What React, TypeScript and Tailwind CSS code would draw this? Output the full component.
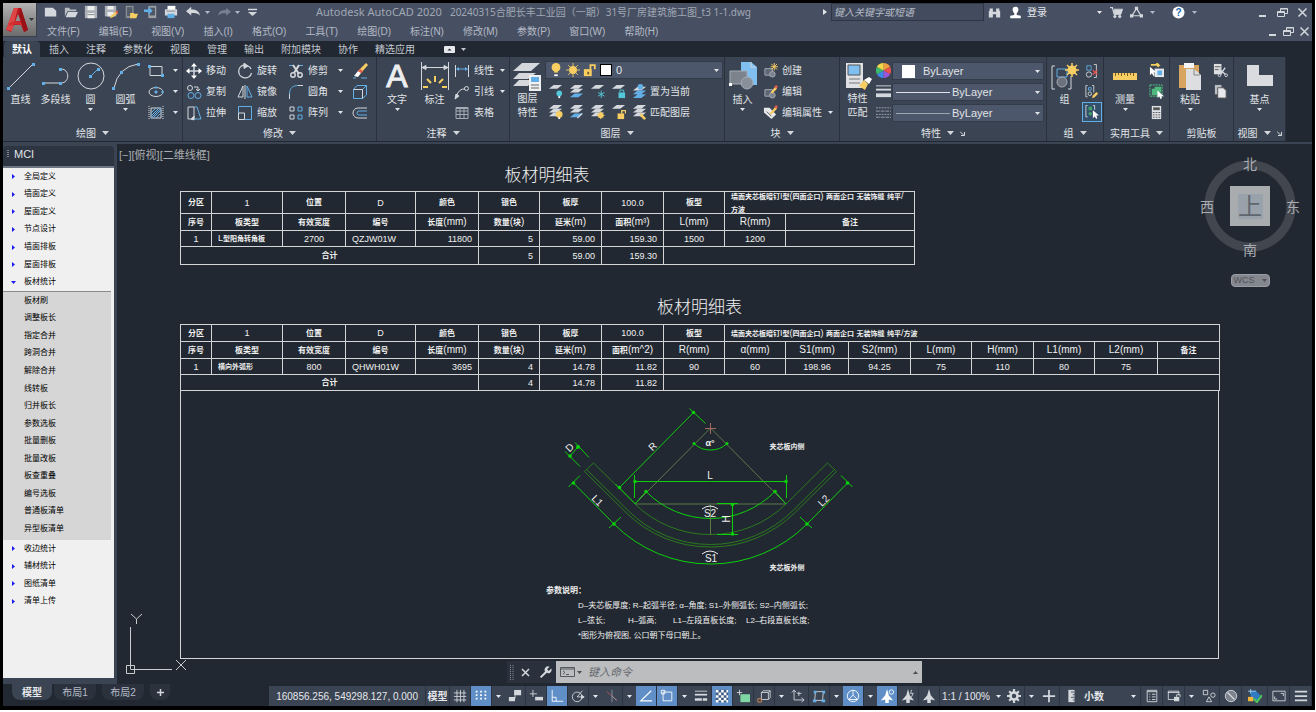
import type { ReactNode } from 'react';

const menus = ['文件(F)', '编辑(E)', '视图(V)', '插入(I)', '格式(O)', '工具(T)', '绘图(D)', '标注(N)', '修改(M)', '参数(P)', '窗口(W)', '帮助(H)'];
const ribbonTabs = ['默认', '插入', '注释', '参数化', '视图', '管理', '输出', '附加模块', '协作', '精选应用'];
const topItems = ['全局定义', '墙面定义', '屋面定义', '节点设计', '墙面排板', '屋面排板', '板材统计'];
const subItems = ['板材刷', '调整板长', '指定合并', '跨洞合并', '解除合并', '线转板', '归并板长', '参数选板', '批量删板', '批量改板', '板查重叠', '编号选板', '普通板清单', '异型板清单'];
const endItems = ['收边统计', '辅材统计', '图纸清单', '清单上传'];

const G = '#d4d8dd'; // light grey strokes
const B = '#62aee6'; // blue accent
const Y = '#f8cd62'; // yellow accent

/* ---------- small helpers ---------- */

function Ico({ s = 16, w, vb = '0 0 16 16', children }: { s?: number; w?: number; vb?: string; children: ReactNode }) {
  return (
    <svg width={w ?? s} height={s} viewBox={vb} fill="none" stroke={G} strokeWidth="1" className="shrink-0" aria-hidden="true">
      {children}
    </svg>
  );
}

function Caret({ up = false }: { up?: boolean }) {
  return (
    <svg width="5" height="3" viewBox="0 0 5 3" fill="currentColor" className="shrink-0" aria-hidden="true">
      <path d={up ? 'M0 3h5L2.5 0z' : 'M0 0h5L2.5 3z'} />
    </svg>
  );
}

function Big({ label, icon, caret, w = 'w-[35px]' }: { label: string[]; icon: ReactNode; caret?: boolean; w?: string }) {
  return (
    <button className={`${w} flex h-full shrink-0 flex-col items-center`}>
      <span className="flex h-8 items-center justify-center">{icon}</span>
      {label.map((l) => (
        <span key={l} className={label.length > 1 ? 'leading-[14px]' : 'leading-4'}>{l}</span>
      ))}
      {caret && <Caret />}
    </button>
  );
}

function Small({ label, icon, caret, w = '' }: { label?: string; icon: ReactNode; caret?: boolean; w?: string }) {
  return (
    <button className={`${w} flex h-[21px] items-center gap-0.5 whitespace-nowrap`}>
      <span className="flex w-5 shrink-0 justify-center">{icon}</span>
      {label}
      {caret && <span className="ml-auto"><Caret /></span>}
    </button>
  );
}

function Panel({ title, w, caret = true, launcher, children }: { title: string; w: string; caret?: boolean; launcher?: boolean; children: ReactNode }) {
  return (
    <section className={`${w} flex shrink-0 flex-col border-r border-[#2a313d] bg-[#3b4453] pt-[3px]`}>
      <div className="flex h-[63px]">{children}</div>
      <div className="flex h-[18px] items-center justify-center gap-1.5 pt-0.5">
        {title}
        {caret && <svg width="7" height="4" viewBox="0 0 7 4" fill={G} aria-hidden="true"><path d="M0 0h7L3.500 4z" /></svg>}
        {launcher && <Ico s={5} vb="0 0 5 5"><path d="M0 .5l4 4M4.500 1v3.500H1" /></Ico>}
      </div>
    </section>
  );
}

function Combo({ label, prefix, value }: { label: string; prefix: ReactNode; value: string }) {
  return (
    <div className="flex h-[18px] items-center border border-[#333b49] bg-[#4c576b] px-[3px]">
      {prefix}
      <select aria-label={label} className="h-4 min-w-0 flex-1 appearance-none bg-transparent text-[11px] leading-4 outline-none">
        <option>{value}</option>
      </select>
      <Caret />
    </div>
  );
}

/* ---------- window header ---------- */

function WinControls({ w }: { w: string }) {
  return (
    <div className="flex">
      <button aria-label="最小化" className={`${w} flex items-center justify-center`}><Ico s={11} vb="0 0 11 11"><path d="M2 9h7" strokeWidth="2" /></Ico></button>
      <button aria-label="还原" className={`${w} flex items-center justify-center`}><Ico s={11} vb="0 0 11 11"><path d="M.5 4.500h7v5h-7zM.5 5.500h7M3.500 4V1.500h7v5H8M3.500 2h7" /></Ico></button>
      <button aria-label="关闭" className={`${w} flex items-center justify-center`}><Ico s={11} vb="0 0 11 11"><path d="M1.500 1.500l8 8m0-8l-8 8" strokeWidth="1.500" /></Ico></button>
    </div>
  );
}

const quickAccess: [string, ReactNode][] = [
  ['新建', <path d="M1 3h9l4 3.500V13H1z" fill={G} stroke="none" />],
  ['打开', <g stroke="none" fill="#b9bdc2"><path d="M1 3h5l1 2h7v2H4l-3 6z" /><path d="M4.500 8H16l-3 6H2z" fill={G} /></g>],
  ['保存', <g stroke="none"><path d="M1 1h14v14H1z" fill="#aeb2b8" /><path d="M4 1h8v5H4zM4 9h8v6H4z" fill="#eceded" /><path d="M4 11h8" stroke="#777" /></g>],
  ['另存为', <g stroke="none"><path d="M1 1h13v12H1z" fill="#aeb2b8" /><path d="M4 1h7v4H4zM4 8h7v5H4z" fill="#eceded" /><path d="M7 15l1-3 6-5 2 2-6 5z" fill={Y} /><path d="M13 8l2-2 2 2-2 2z" fill="#d95b4c" /></g>],
  ['从移动设备打开', <g stroke="none"><path d="M2 1h9v14H2z" fill="#8a8d91" /><path d="M3.500 2.500h6v10h-6z" fill="#555d69" /><path d="M7 9h4l1 1h4l-2 5H7z" fill={Y} /></g>],
  ['保存到移动设备', <g stroke="none"><path d="M5 1h9v14H5z" fill="#9da1a6" /><path d="M6.500 3h6v9h-6z" fill="#4d5665" /><path d="M0 5h5V2l5 4.500L5 11V8H0z" fill={B} /></g>],
  ['打印', <g stroke="none"><path d="M4 1h9v5H4z" fill="#fff" /><path d="M1 5h14v7H1z" fill={G} /><path d="M4 10h8v5H4z" fill={B} /><path d="M3 7h10" stroke="#7d838c" /></g>],
];

function Header() {
  return (
    <header className="flex h-[38px] shrink-0 bg-[#475063] text-[10px] text-[#b4bac5]">
      <button aria-label="应用程序菜单" className="flex size-[34px] shrink-0 items-center justify-center border-r border-b border-[#3a3f49] bg-linear-to-b from-[#b4b4b4] to-[#6c6c6c] text-[#30343b]">
        <svg width="23" height="26" viewBox="0 0 23 26" aria-hidden="true">
          <path d="M8 1h7l7 22-4 2-3-7H8l-3 7-5-2z" fill="#b5191f" />
          <path d="M8 1h4L6 24l-6-1z" fill="#e04545" />
          <path d="M12 7l2.500 7h-5z" fill="#8f9092" />
          <path d="M4 16q8-4 14 1l1 3q-8-5-16-1z" fill="#d02c31" />
          <path d="M15 1l7 22-4 2-5-18z" fill="#971116" />
        </svg>
        <Caret />
      </button>
      <div className="flex min-w-0 flex-1 flex-col">
        <div className="flex h-[18px] items-center">
          <div className="ml-1 flex items-center">
            {quickAccess.map(([name, d]) => (
              <button key={name} aria-label={name} className="flex w-5 justify-center"><Ico s={14}>{d}</Ico></button>
            ))}
            <button aria-label="放弃" className="flex w-6 justify-center"><Ico s={14}><path d="M0 7l6-5v3c6 0 9 2 10 7-3-3-6-3-10-3v3z" fill={G} stroke="none" /></Ico></button>
            <span className="w-2"><Caret /></span>
            <button aria-label="重做" className="flex w-[22px] justify-center"><Ico s={13}><path d="M16 7l-6-5v3C4 5 1 7 0 12c3-3 6-3 10-3v3z" fill="#77808f" stroke="none" /></Ico></button>
            <span className="w-2"><Caret /></span>
            <button aria-label="自定义快速访问工具栏" className="flex w-[18px] justify-center"><Ico s={9} vb="0 0 9 9"><path d="M0 1.500h9" strokeWidth="1.500" /><path d="M0 4h9L4.500 8z" fill={G} stroke="none" /></Ico></button>
          </div>
          <h1 className="flex min-w-0 flex-1 items-center overflow-hidden pl-[55px] font-['Noto_Sans','Noto_Sans_CJK_SC',sans-serif] text-[11px] whitespace-nowrap text-[#a0a7b3]">
            Autodesk AutoCAD 2020<span className="ml-2 text-[10px]">20240315合肥长丰工业园（一期）31号厂房建筑施工图_t3 1-1.dwg</span>
          </h1>
          <svg width="4" height="6" viewBox="0 0 4 6" className="mr-1" aria-hidden="true"><path d="M0 0v6l4-3z" fill="#e4e6e9" /></svg>
          <input aria-label="搜索" placeholder="键入关键字或短语" className="h-[18px] w-[153px] border border-[#2e3543] bg-[#434c5e] px-0.5 text-[10px] italic outline-none placeholder:text-[#b4bac5]" />
          <button aria-label="查找" className="flex w-5 justify-center"><Ico s={13}><path d="M2 3h4v3H2zm8 0h4v3h-4zM1 6h5v8H1zm9 0h5v8h-5zM6 7h4v3H6z" fill={G} stroke="none" /></Ico></button>
          <button className="flex w-[102px] items-center text-[#e4e6e9]">
            <span className="flex w-[23px] justify-center"><Ico s={13}><path d="M8 1c5 0 4 6 1.500 8v2l5 1v3h-13v-3l5-1V9C4 7 3 1 8 1z" fill="#fff" stroke="none" /></Ico></span>
            登录
            <span className="ml-auto mr-1"><Caret /></span>
          </button>
          <button aria-label="应用商店" className="flex w-5 justify-center"><Ico s={13}><path d="M0 2h3l2 8h8l2-6H5" strokeWidth="1.500" /><path d="M5 5h10l-2 5H6z" fill={G} /><circle cx="6" cy="13" r="1.500" fill={G} /><circle cx="12" cy="13" r="1.500" fill={G} /></Ico></button>
          <button aria-label="Autodesk 账户" className="flex w-5 justify-center"><Ico s={13}><path d="M8 3l5.500 9h-11z" strokeWidth="1.500" /><path d="M6 1h4v4H6zM0 10h4v4H0zm12 0h4v4h-4z" fill={G} stroke="none" /></Ico></button>
          <span className="mr-2.5 flex w-3 justify-center"><Caret /></span>
          <button aria-label="帮助" className="flex w-5 justify-center">
            <svg width="13" height="13" viewBox="0 0 13 13" aria-hidden="true"><circle cx="6.500" cy="6.500" r="6" fill="#fff" /><text x="6.500" y="10" fontSize="10" fontWeight="700" textAnchor="middle" fill="#2467a8">?</text></svg>
          </button>
          <span className="mr-[52px] flex w-3 justify-center"><Caret /></span>
          <WinControls w="w-5" />
        </div>
        <div className="flex h-5 items-center justify-between">
          <nav className="flex gap-[19px] pl-2.5">
            {menus.map((m) => <button key={m}>{m}</button>)}
          </nav>
          <WinControls w="w-4" />
        </div>
      </div>
    </header>
  );
}

/* ---------- ribbon ---------- */

const sheet = (y: number) => <path d={`M1 ${y + 4}l5-4h9l-5 4z`} fill={G} stroke="none" />;

const layerTools: ReactNode[] = [
  <>{sheet(1)}<circle cx="12" cy="10" r="3" fill="#54c8d8" stroke="none" /><path d="M11 13h2v2h-2z" fill="#fff" stroke="none" /></>,
  <>{sheet(1)}{sheet(5)}<path d="M1 14l5-4h9l-5 4z" fill={B} stroke="none" /></>,
  <>{sheet(1)}<path d="M12 7v8M8.500 9l7 4m0-4l-7 4" stroke="#54c8d8" /></>,
  <>{sheet(1)}<path d="M8 9h7v6H8z" fill="#54c8d8" stroke="none" /><path d="M9.500 9V6.500h4V9" stroke="#54c8d8" /></>,
  <>{sheet(3)}<path d="M1 11l5-4h9l-5 4zM1 15l5-4h9l-5 4z" fill={B} stroke="none" /><circle cx="9" cy="3" r="3" fill={B} stroke="none" /></>,
];
const layerTools2: ReactNode[] = [
  <>{sheet(0)}{sheet(4)}{sheet(8)}<circle cx="12" cy="10" r="3.500" fill={Y} stroke="none" /><path d="M11 13h2v2h-2z" fill="#fff" stroke="none" /></>,
  <>{sheet(0)}{sheet(4)}<path d="M1 13l5-4h9l-5 4z" fill={B} stroke="none" /><path d="M9 14l5-5" strokeWidth="1.500" /></>,
  <>{sheet(0)}{sheet(4)}{sheet(8)}<circle cx="11.500" cy="11" r="3" fill={Y} stroke="none" /><path d="M11.500 7v8M7.500 11h8M9 8.500l5 5m0-5l-5 5" stroke={Y} /></>,
  <>{sheet(0)}<path d="M7 9h7v6H7z" fill={Y} stroke="none" /><path d="M11.500 9V6h4v3" stroke={Y} strokeWidth="1.500" /></>,
  <>{sheet(0)}{sheet(4)}{sheet(8)}<path d="M9 8l6 6-2 2-4-4z" fill={Y} stroke="none" /></>,
];

function Ribbon() {
  return (
    <div className="flex h-[85px] shrink-0 border-b border-[#222831] bg-[#222831] text-[10px] text-[#e1e4e8]">
      <Panel title="绘图" w="w-[180px]">
        <Big label={['直线']} icon={<Ico s={28} vb="0 0 28 28"><path d="M2 26L26 2" /><path d="M0 25h3v3H0zM25 1h3v3h-3z" fill={B} stroke="none" /></Ico>} />
        <Big label={['多段线']} icon={<Ico s={28} vb="0 0 28 28"><path d="M1 21h18c9 0 9-14 0-14" /><path d="M0 20h3v3H0zM17 20h3v3h-3zM17 6h3v3h-3z" fill={B} stroke="none" /></Ico>} />
        <Big label={['圆']} caret icon={<Ico s={28} vb="0 0 28 28"><circle cx="14" cy="14" r="13" /><path d="M14 14l7-7" stroke={B} /><path d="M12 13h3v3h-3zM20 6h3v3h-3z" fill={B} stroke="none" /></Ico>} />
        <Big label={['圆弧']} caret icon={<Ico s={28} vb="0 0 28 28"><path d="M2 26Q6 5 26 2" /><path d="M0 25h3v3H0zM8 9h3v3H8zM25 1h3v3h-3z" fill={B} stroke="none" /></Ico>} />
        <div className="pl-[3px]">
          <Small w="w-8" caret icon={<Ico><path d="M2 3.500h12v9H2z" /><path d="M0 2h3v3H0zM13 11h3v3h-3z" fill={B} stroke="none" /></Ico>} />
          <Small w="w-8" caret icon={<Ico><ellipse cx="8" cy="8" rx="7" ry="4.500" /><path d="M7 7h2v2H7zM7 3h2v1H7zM14 7h1v2h-1z" fill={B} stroke={B} /></Ico>} />
          <Small w="w-8" caret icon={<Ico><path d="M3 3h10v10H3z" /><path d="M3 8l5-5M3 13L13 3M8 13l5-5M5 13l8-8M3 11l8-8" stroke={B} /><path d="M1 1v14M15 1v14" strokeDasharray="1 1" /></Ico>} />
        </div>
      </Panel>

      <Panel title="修改" w="w-[194px]">
        <div className="ml-px">
          <Small w="w-[51px]" label="移动" icon={<Ico><path d="M8 2v12M2 8h12" strokeWidth="1.500" /><path d="M8 0l3 3.500H5zM8 16l3-3.500H5zM0 8l3.500-3v6zM16 8l-3.500-3v6z" fill="#fff" stroke="none" /></Ico>} />
          <Small w="w-[51px]" label="复制" icon={<Ico><circle cx="4" cy="4" r="2.500" /><path d="M8 3h4v3m-2-1l2 2 2-2" /><circle cx="5" cy="11.500" r="3" stroke={B} /><circle cx="12" cy="11.500" r="3" stroke={B} /></Ico>} />
          <Small w="w-[51px]" label="拉伸" icon={<Ico><path d="M2 2h6v12H2z" /><path d="M8 2h3l4 12H8" stroke={B} /><path d="M5 14l3-3v4z" fill={G} /></Ico>} />
        </div>
        <div>
          <Small w="w-[51px]" label="旋转" icon={<Ico><path d="M7 2a6.500 6.500 0 1 0 7.500 8M11 3a6 6 0 0 1 3 3" strokeWidth="1.300" /><path d="M7 0l4 3-4 2.500z" fill={G} /></Ico>} />
          <Small w="w-[51px]" label="镜像" icon={<Ico><path d="M6 2v11H1z" /><path d="M8 1v14" /><path d="M10 2v11h5z" stroke={B} /></Ico>} />
          <Small w="w-[51px]" label="缩放" icon={<Ico><path d="M1.500 8V1.500h13v13H8" stroke={B} /><path d="M1.500 8h6v6.500h-6z" /></Ico>} />
        </div>
        <div>
          <Small w="w-[57px]" caret label="修剪" icon={<Ico><path d="M1 2.500h4M10 2.500h5" stroke={B} /><path d="M5 2l6 9M11 2L6 10" strokeWidth="2" /><circle cx="5" cy="12" r="2.200" strokeWidth="1.500" /><circle cx="12" cy="12" r="2.200" strokeWidth="1.500" /></Ico>} />
          <Small w="w-[57px]" caret label="圆角" icon={<Ico><path d="M1.500 15V9C2 4 5 1.500 10 1.500h5" stroke={B} /><path d="M1.500 15v-5M10 1.500h5" /></Ico>} />
          <Small w="w-[57px]" caret label="阵列" icon={<Ico><path d="M2 2h4v4H2zM2 10h4v4H2z" /><path d="M10 2h4v4h-4zM10 10h4v4h-4z" stroke={B} /></Ico>} />
        </div>
        <div className="pl-[7px]">
          <Small icon={<Ico><path d="M14 0l2 2-7 8-3-2z" fill={Y} stroke="none" /><path d="M6 8l3 2-3 4-4-1z" fill="#fff" stroke="none" /><path d="M8 6l3 2-2 2-3-2z" fill="#e8604c" stroke="none" /><path d="M1 15h3m5 0h6" stroke={B} /></Ico>} />
          <Small icon={<Ico><path d="M1.500 5.500h9v9h-9zM10.500 14.500l4-3.500V1.500H5L1.500 5.500M10.500 5.500l4-4" stroke={B} /><path d="M1.500 5.500h9v9" /></Ico>} />
          <Small icon={<Ico><path d="M15 3H6a5 5 0 0 0 0 10h9" /><path d="M15 6H7a2 2 0 0 0 0 4h8" stroke={B} /></Ico>} />
        </div>
      </Panel>

      <Panel title="注释" w="w-[133px]">
        <Big w="w-10" label={['文字']} caret icon={<svg width="28" height="30" viewBox="0 0 28 30" className="overflow-visible" aria-hidden="true"><text x="14" y="26" textAnchor="middle" fontSize="32" fill="#eceef0" stroke="#eceef0" strokeWidth="1">A</text></svg>} />
        <Big label={['标注']} icon={<Ico s={28} vb="0 0 28 28"><path d="M.5 0v28M27.500 0v28M1 5.500h26" /><path d="M1 5.500l4-2v4zM27 5.500l-4-2v4z" fill={G} /><path d="M14 14v6M6 17l4 4M22 17l-4 4M2 25h5M21 25h5" stroke={Y} strokeWidth="2" /></Ico>} />
        <div>
          <Small w="w-[53px]" caret label="线性" icon={<Ico><path d="M1.500 2v12M14.500 2v12" /><path d="M3 6h10" stroke={B} /><path d="M2 6l3-2v4zM14 6l-3-2v4z" fill={B} stroke="none" /></Ico>} />
          <Small w="w-[53px]" caret label="引线" icon={<Ico><path d="M2 13Q5 4 11 5" /><path d="M1 15l1-5 3 2z" fill={G} /><circle cx="12.500" cy="4.500" r="2" /></Ico>} />
          <Small w="w-[53px]" label="表格" icon={<Ico><path d="M2 2.500h12v11H2zM2 6h12M2 9.500h12M6 3v10M10 3v10" stroke="#a4abb5" /><path d="M2 2h12v2H2z" fill="#a4abb5" stroke="none" /></Ico>} />
        </div>
      </Panel>

      <Panel title="图层" w="w-[215px]">
        <Big label={['图层', '特性']} icon={<Ico s={29} vb="0 0 29 29"><g fill={G} stroke="none"><path d="M9 1h18l-9 8H0zM6 11h17l-8 6H0zM6 18h14l-5 6H0z" /><path d="M16 13h12v16H16z" fill="#eef0f2" /><path d="M18 15h8v5h-8z" fill={B} /></g><path d="M18 23h8M18 26h8" stroke="#666" /></Ico>} />
        <div className="flex min-w-0 flex-1 flex-col">
          <div className="h-[21px] pt-px pr-px">
            <Combo label="图层" value="0" prefix={
              <span className="flex items-center gap-[3px] pr-1">
                <Ico s={14}><circle cx="8" cy="5" r="5" fill={Y} stroke="none" /><path d="M6 9h4v2H6z" fill={Y} stroke="none" /><path d="M6 13h4v2H6z" fill="#fff" stroke="none" /></Ico>
                <Ico s={14}><circle cx="8" cy="8" r="4.500" fill={Y} stroke="none" /><path d="M8 0v16M0 8h16M2.500 2.500l11 11m0-11l-11 11" stroke={Y} /></Ico>
                <Ico s={14}><path d="M1 7h9v8H1z" fill={Y} stroke="none" /><path d="M8.500 7V2.500h5V7" stroke={Y} strokeWidth="2" /><path d="M5 10h2v3H5z" fill="#6b5520" stroke="none" /></Ico>
                <span className="size-3 border border-black bg-white" />
              </span>
            } />
          </div>
          <div className="flex h-[21px] items-center">
            {layerTools.map((d, i) => <button key={i} className="flex w-[21px] justify-center"><Ico s={15}>{d}</Ico></button>)}
            <button>置为当前</button>
          </div>
          <div className="flex h-[21px] items-center">
            {layerTools2.map((d, i) => <button key={i} className="flex w-[21px] justify-center"><Ico s={15}>{d}</Ico></button>)}
            <button>匹配图层</button>
          </div>
        </div>
      </Panel>

      <Panel title="块" w="w-[115px]">
        <Big label={['插入']} caret icon={<Ico s={28} vb="0 0 28 28"><path d="M12 0h10l6 5v18H12z" fill="#7fc0f0" stroke="none" /><path d="M22 0v5h5" /><path d="M1 9h17v13H1z" fill="#7d838c" stroke="#a4abb5" /><circle cx="18" cy="21" r="6" fill="#8a9099" stroke="#a4abb5" /><path d="M0 21h3v3H0z" fill="#fff" stroke="none" /></Ico>} />
        <div>
          <Small label="创建" icon={<Ico s={15}><path d="M2 6h8v7H2z" fill="#5f6774" stroke="#a4abb5" /><circle cx="10" cy="12" r="3" fill="#7d838c" stroke="#a4abb5" /><path d="M12 0v8M8 4h8M9 1l6 6m0-6L9 7" stroke={Y} /></Ico>} />
          <Small label="编辑" icon={<Ico s={15}><path d="M2 6h8v7H2z" fill="#5f6774" stroke="#a4abb5" /><circle cx="10" cy="12" r="3" fill="#7d838c" stroke="#a4abb5" /><path d="M8 9l5-6 2 2-5 5z" fill={Y} stroke="none" /><path d="M12 3l2-2 2 2-2 2z" fill="#e8604c" stroke="none" /></Ico>} />
          <Small w="w-[73px]" caret label="编辑属性" icon={<Ico s={15}><path d="M1 3h6l7 7-5 5-8-7z" fill="#e6e8ea" stroke="none" /><path d="M4 7l5 5" stroke="#555" /><path d="M7 9l6-7 2 2-6 6z" fill={Y} stroke="none" /><path d="M12 2l2-2 2 2-2 2z" fill="#e8604c" stroke="none" /></Ico>} />
        </div>
      </Panel>

      <Panel title="特性" w="w-[207px]" launcher>
        <Big label={['特性', '匹配']} icon={<Ico s={28} vb="0 0 28 28"><path d="M2 1h17v25H2z" fill="#dfe1e4" stroke="none" /><path d="M4 3h12v10H4z" fill="#7fc0f0" stroke="#555" /><path d="M5 17h11M5 21h11" stroke="#777" /><path d="M15 24l6 4 3-6-4-4z" fill={Y} stroke="none" /><path d="M20 18l5 4 3-5-3-2z" fill="#fff" stroke="none" /></Ico>} />
        <div className="flex w-[17px] flex-col items-center">
          <button aria-label="颜色" className="flex h-[21px] items-center">
            <Ico s={15} vb="-8 -8 16 16"><g stroke="none"><path d="M0 0V-8A8 8 0 0 1 7-4z" fill="#f0a040" /><path d="M0 0L7-4A8 8 0 0 1 7 4z" fill="#e8524a" /><path d="M0 0L7 4A8 8 0 0 1 0 8z" fill="#9a55d8" /><path d="M0 0V8A8 8 0 0 1-7 4z" fill="#3f86e6" /><path d="M0 0L-7 4A8 8 0 0 1-7-4z" fill="#3cb86a" /><path d="M0 0L-7-4A8 8 0 0 1 0-8z" fill="#f5d94a" /></g></Ico>
          </button>
          <button aria-label="线宽" className="flex h-[21px] items-center"><Ico s={15}><path d="M0 2h16" /><path d="M0 6h16" strokeWidth="2" /><path d="M0 12h16" strokeWidth="4" /></Ico></button>
          <button aria-label="线型" className="flex h-[21px] items-center"><Ico s={15}><path d="M0 3h16M0 10h16" strokeDasharray="2 1" stroke="#9fa5af" /><path d="M0 6.500h16M0 13h16" strokeDasharray="4 1" stroke="#9fa5af" /></Ico></button>
        </div>
        <div className="flex flex-1 flex-col gap-[3px] pt-[2px] pr-[2px]">
          <Combo label="对象颜色" value="ByLayer" prefix={<span className="mr-2 ml-1.5 size-[13px] bg-white" />} />
          <Combo label="对象线宽" value="ByLayer" prefix={<span className="mr-0.5 w-[54px] border-t border-[#dfe2e6]" />} />
          <Combo label="对象线型" value="ByLayer" prefix={<span className="mr-0.5 w-[54px] border-t border-[#9fa5af]" />} />
        </div>
      </Panel>

      <Panel title="组" w="w-[57px]">
        <Big label={['组']} icon={<Ico s={28} vb="0 0 28 28"><path d="M4 4H1v23h3M17 27h3V14" /><path d="M6 7h10v8H6z" stroke={B} /><circle cx="11" cy="20" r="5" fill="#6c737e" stroke="#a4abb5" /><circle cx="21" cy="8" r="4.500" fill={Y} stroke="none" /><path d="M21 1v14M14 8h14M16 3l10 10m0-10L16 13" stroke={Y} strokeWidth="1.500" /></Ico>} />
        <div className="flex flex-col">
          <Small icon={<Ico s={14}><path d="M2 2h5v5H2z" stroke={B} /><circle cx="4.500" cy="12" r="3" /><path d="M10 .5h3v15h-3" /><path d="M9 7l5 5m0-5l-5 5" stroke="#e8524a" strokeWidth="1.500" /></Ico>} />
          <Small icon={<Ico s={14}><path d="M3 .5H1v13h2M8 .5h2v8" /><path d="M4 3h3v3H4z" stroke={B} /><circle cx="5.500" cy="10" r="2" /><path d="M8 15l1-3 4-4 2 2-4 4z" fill={Y} stroke="none" /></Ico>} />
          <button aria-label="组选择" className="flex size-5 items-center justify-center border border-[#62aee6] bg-[#35506b]"><Ico s={14}><path d="M3 .5H1v13h2M9 .5h2v5" /><path d="M4 2h4v4H4z" fill="#3fa36b" stroke="none" /><circle cx="6" cy="10" r="2" fill="#3fa36b" stroke="none" /><path d="M9 6v9l2-2 2 3 1-1-1-3h3z" fill="#fff" stroke="none" /></Ico></button>
        </div>
      </Panel>

      <Panel title="实用工具" w="w-[66px]">
        <Big w="w-[42px]" label={['测量']} caret icon={<Ico s={24} vb="0 0 24 24"><path d="M0 9h24v7H0z" fill={Y} stroke="none" /><path d="M2.500 9v3M5.500 9v2M8.500 9v3M11.500 9v2M14.500 9v3M17.500 9v2M20.500 9v3" stroke="#7a6020" /></Ico>} />
        <div>
          <Small icon={<Ico s={15}><path d="M6 6h10v9H6z" fill="#e6e9ec" stroke="none" /><path d="M9 8h5v5H9z" fill={B} stroke="none" /><path d="M2 2h8l-2-2M9 4l2-2" stroke={Y} strokeWidth="2" /><path d="M1 4v9l2-2 2 3 1-1-1-3h3z" fill="#fff" stroke="none" /></Ico>} />
          <Small icon={<Ico s={15}><path d="M1 1h13v12H1z" stroke="#4fd08a" strokeDasharray="2 1" /><path d="M3 5h8v7H3zM6 3h7v6H6z" fill="#4fb87c" stroke="none" /><path d="M9 7v8l2-2 1 3 2-1-1-2h3z" fill="#fff" stroke="none" /></Ico>} />
          <Small icon={<Ico s={15}><path d="M3 1h10v14H3z" fill="#e0e3e6" stroke="none" /><path d="M4.500 2.500h7v3h-7z" fill="#555" stroke="none" /><path d="M4 8h8M4 10.500h8M4 13h8" stroke="#555" strokeDasharray="2 1" /></Ico>} />
        </div>
      </Panel>

      <Panel title="剪贴板" w="w-[64px]" caret={false}>
        <Big w="w-10" label={['粘贴']} caret icon={<Ico s={28} w={24} vb="0 0 24 28"><path d="M1 3h20v23H1z" fill="#d8a561" stroke="none" /><path d="M6 1h10v5H6z" fill="#f4f5f6" stroke="none" /><path d="M8 7h8l7 6v15H8z" fill="#dcdee0" stroke="none" /><path d="M16 7v6h6" stroke="#888" /></Ico>} />
        <div>
          <Small icon={<Ico s={15}><path d="M1 1h8v11H1z" fill="#dcdee0" stroke="none" /><path d="M2 4h6M2 7h6" stroke="#555" /><path d="M6 6l7 6M13 5l-5 7" strokeWidth="1.500" /><circle cx="7" cy="13" r="1.500" /><circle cx="14" cy="13" r="1.500" /></Ico>} />
          <Small icon={<Ico s={15}><path d="M2 1h7v10H2z" fill="#b9bcc1" stroke="none" /><path d="M5 4h6l3 3v8H5z" fill="#e6e8ea" stroke="#555" /></Ico>} />
        </div>
      </Panel>

      <Panel title="视图" w="w-[52px]" launcher>
        <Big w="w-full" label={['基点']} caret icon={<Ico s={28} vb="0 0 28 28"><path d="M1 3h12v10h14v11H1z" fill="#d9dbdf" stroke="none" /></Ico>} />
      </Panel>
    </div>
  );
}

/* ---------- MCI palette ---------- */

function TreeItem({ label, open }: { label: string; open?: boolean }) {
  return (
    <button className="flex flex-1 items-center text-left">
      <span className="flex w-[21px] justify-center">
        <svg width="5" height="5" viewBox="0 0 5 5" fill="#1a1af0" aria-hidden="true"><path d={open ? 'M0 1h5L2.500 4z' : 'M1 0v5l3-2.500z'} /></svg>
      </span>
      {label}
    </button>
  );
}

function Palette() {
  return (
    <aside className="flex w-[111px] shrink-0 flex-col pt-0.5 pb-1.5">
      <h2 className="flex h-5 items-center gap-1 rounded-t bg-[#2d3442] px-1 pb-1 text-[11px] text-[#e1e4e8]">
        <svg width="3" height="8" viewBox="0 0 3 8" fill="#7d8592" aria-hidden="true"><path d="M0 0h2v1H0zM0 2h2v1H0zM0 4h2v1H0zM0 6h2v1H0z" /></svg>
        MCI
      </h2>
      <div className="flex-1 border-t-2 border-[#6e7585] bg-[#f0f0f0] text-[8px] text-black">
        <div className="flex h-[442px] flex-col">
          <div className="flex flex-[7] flex-col">
            {topItems.map((t) => <TreeItem key={t} label={t} open={t === '板材统计'} />)}
          </div>
          <div className="mr-[3px] flex flex-[14] flex-col border-t border-[#8b8b8b] bg-[#d6d6d6] pb-0.5">
            {subItems.map((t) => <button key={t} className="flex flex-1 items-center pl-[21px]">{t}</button>)}
          </div>
          <div className="flex flex-[4] flex-col">
            {endItems.map((t) => <TreeItem key={t} label={t} />)}
          </div>
        </div>
      </div>
    </aside>
  );
}

/* ---------- drawing ---------- */

// Chinese strokes are set smaller than the latin ones, as in the shx font pair
function Cad({ children, size = 'text-[10px]', cjk = 'text-[8px]' }: { children: string; size?: string; cjk?: string }) {
  return (
    <>
      {children.split(/([\u4e00-\u9fff]+)/).map((t, i) => (
        <span key={i} className={i % 2 ? `${cjk} font-bold` : size}>{t}</span>
      ))}
    </>
  );
}

type Cell = { t: string; span?: number; a?: 'l' | 'r'; wrap?: boolean };
const baseCols = [31, 71, 63, 70, 63, 61, 62, 62];
const spec = '墙面夹芯板暗钉I型(四面企口) 两面企口 无装饰缝 纯平/方波';
const c = (...t: string[]): Cell[] => t.map((v) => ({ t: v }));
const head = c('分区', '1', '位置', 'D', '颜色', '银色', '板厚', '100.0', '板型');

const table1 = {
  cols: [...baseCols, 61, 61, 129],
  heights: ['h-[22px]', 'h-[17px]', 'h-4', 'h-[18px]'],
  rows: [
    [...head, { t: spec, span: 2, a: 'l', wrap: true }],
    c('序号', '板类型', '有效宽度', '编号', '长度(mm)', '数量(块)', '延米(m)', '面积(m³)', 'L(mm)', 'R(mm)', '备注'),
    [{ t: '1' }, { t: 'L型阳角转角板', a: 'l' }, { t: '2700' }, { t: 'QZJW01W', a: 'l' }, { t: '11800', a: 'r' }, { t: '5', a: 'r' }, { t: '59.00', a: 'r' }, { t: '159.30', a: 'r' }, ...c('1500', '1200', '')],
    [{ t: '合计', span: 5 }, { t: '5', a: 'r' }, { t: '59.00', a: 'r' }, { t: '159.30', a: 'r' }, { t: '', span: 3 }],
  ] as Cell[][],
};

const table2 = {
  cols: [...baseCols, 61, 61, 63, 62, 61, 62, 61, 63, 62],
  heights: ['h-[17px]', 'h-[17px]', 'h-4', 'h-4'],
  rows: [
    [...head, { t: spec, span: 8, a: 'l' }],
    c('序号', '板类型', '有效宽度', '编号', '长度(mm)', '数量(块)', '延米(m)', '面积(m^2)', 'R(mm)', 'α(mm)', 'S1(mm)', 'S2(mm)', 'L(mm)', 'H(mm)', 'L1(mm)', 'L2(mm)', '备注'),
    [{ t: '1' }, { t: '横向外弧形', a: 'l' }, { t: '800' }, { t: 'QHWH01W', a: 'l' }, { t: '3695', a: 'r' }, { t: '4', a: 'r' }, { t: '14.78', a: 'r' }, { t: '11.82', a: 'r' }, ...c('90', '60', '198.96', '94.25', '75', '110', '80', '75', '')],
    [{ t: '合计', span: 5 }, { t: '4', a: 'r' }, { t: '14.78', a: 'r' }, { t: '11.82', a: 'r' }, { t: '', span: 9 }],
  ] as Cell[][],
};

function PanelTable({ data, w }: { data: typeof table1; w: string }) {
  return (
    <table className={`${w} table-fixed border-collapse`}>
      <colgroup>
        {data.cols.map((n, i) => <col key={i} style={{ width: n }} />)}
      </colgroup>
      <tbody>
        {data.rows.map((row, r) => (
          <tr key={r} className={data.heights[r]}>
            {row.map((cell, i) => (
              <td
                key={i}
                colSpan={cell.span}
                className={`border border-[#d2d4d6] p-0 text-[9px] leading-3 ${cell.a === 'l' ? 'pl-1.5 text-left' : cell.a === 'r' ? 'pr-1.5 text-right' : 'text-center'}`}
              >
                {cell.wrap
                  ? <div className="flex h-5 items-center pr-2.5"><p><Cad size="text-[9px]" cjk="text-[7px]">{cell.t}</Cad></p></div>
                  : <Cad size={r === 1 ? 'text-[10px]' : 'text-[9px]'} cjk={cell.a ? 'text-[7px]' : 'text-[8px]'}>{cell.t}</Cad>}
              </td>
            ))}
          </tr>
        ))}
      </tbody>
    </table>
  );
}

// one half of the symmetric part of the section sketch
function HalfSection() {
  return (
    <>
      <g stroke="#2a7a1e">
        <path d="M711.500 534.500A107 107 0 0 1 636 504L594.500 463 585.500 471.500 627 512.500A119.500 119.500 0 0 0 711.500 547" />
        <path d="M587.500 469.500L629 510.500A116.500 116.500 0 0 0 711.500 544.500" />
      </g>
      <path d="M711.500 428L636 504H711.500" stroke="#5c7a4a" />
      <path d="M695 443.500A23 23 0 0 0 711.500 450M711.500 564A136 136 0 0 1 615 524L574.500 483M622 517l-12 11M581 475.500L569.500 487M711.500 481.500H635.500M635.500 475v23M711.500 518.500A91 91 0 0 1 647 491.500L636 504" />
      <g fill="#0bd10b" stroke="none">
        <circle cx="636" cy="481.500" r="1.800" />
        <circle cx="574.500" cy="483" r="1.800" />
        <circle cx="615" cy="524" r="1.800" />
        <circle cx="647" cy="491.500" r="1.800" />
        <circle cx="695" cy="443.500" r="1.500" />
      </g>
    </>
  );
}

function ArcSketch() {
  const label = { fill: '#f0f0f0', stroke: 'none', fontSize: 10, textAnchor: 'middle' as const };
  return (
    <svg width="330" height="192" viewBox="540 391 330 192" fill="none" stroke="#0bd10b" role="img" aria-label="弧形板剖面">
      <HalfSection />
      <g transform="translate(1423 0) scale(-1 1)"><HalfSection /></g>
      <path d="M694.500 412.500L620.500 487.500M690.500 408.500l16 15M616.500 484l20 20" />
      <path d="M576 442.500l14 15M566 451.500l15 15M579 447l-8 9M733.500 504v30M718 503.500h21M718 534.500h21" />
      <g fill="#0bd10b" stroke="none">
        <circle cx="694.500" cy="412.500" r="1.800" />
        <circle cx="620.500" cy="487.500" r="1.800" />
        <circle cx="579" cy="447" r="2" />
        <circle cx="571" cy="456" r="1.800" />
        <circle cx="733.500" cy="504.500" r="1.800" />
        <circle cx="733.500" cy="534" r="1.800" />
      </g>
      <path d="M711.500 505v30" stroke="#5c7a4a" />
      <path d="M706 428.500h11M711.500 423v11" stroke="#a06a60" />
      <path d="M703 509q8-6 16 0M703 554q8-6 16 0" stroke="#f0f0f0" />
      <text {...label} x="711" y="479">L</text>
      <text {...label} x="711" y="517">S2</text>
      <text {...label} x="712" y="562">S1</text>
      <text {...label} x="711" y="446" fontSize="9" fontWeight="700">α°</text>
      <text {...label} transform="translate(656 449) rotate(-45)">R</text>
      <text {...label} transform="translate(573 450) rotate(-45)">D</text>
      <text {...label} transform="translate(596 503) rotate(45)">L1</text>
      <text {...label} transform="translate(827 503) rotate(-45)">L2</text>
      <text {...label} transform="translate(731 519) rotate(-90)">H</text>
      <text {...label} x="788" y="449" fontSize="7" fontWeight="700">夹芯板内侧</text>
      <text {...label} x="788" y="570" fontSize="7" fontWeight="700">夹芯板外侧</text>
    </svg>
  );
}

function Canvas() {
  return (
    <main className="relative min-w-0 flex-1 overflow-hidden bg-[#222831] text-[#f0f0f0]">
      <div className="flex h-[22px] items-center px-0.5 text-[11px] text-[#a9acb0]">
        <button>[−]</button><button>[俯视]</button><button>[二维线框]</button>
      </div>

      <div className="ml-[63px] flex flex-col">
        <section className="w-[734px]">
          <h3 className="h-[25px] text-center text-[17px] leading-[19px] font-light">板材明细表</h3>
          <PanelTable data={table1} w="w-[734px]" />
        </section>
        <section className="mt-[33px] w-[1039px]">
          <h3 className="h-[26px] text-center text-[17px] leading-5 font-light">板材明细表</h3>
          <PanelTable data={table2} w="w-[1038px]" />
          <div className="h-[268px] border border-t-0 border-[#d2d4d6]">
            <div className="ml-[358px]"><ArcSketch /></div>
            <div className="ml-[365px] text-[8px] leading-[15px]">
              <p className="font-bold">参数说明：</p>
              <div className="pl-8">
                <p>D–夹芯板厚度; R–起弧半径; α–角度; S1–外侧弧长; S2–内侧弧长;</p>
                <p className="flex"><span className="w-[50px]">L–弦长;</span><span className="w-[45px]">H–弧高;</span><span className="w-[73px]">L1–左段直板长度;</span><span>L2–右段直板长度;</span></p>
                <p>*图形为俯视图, 公口朝下母口朝上。</p>
              </div>
            </div>
          </div>
        </section>
      </div>

      {/* UCS marker */}
      <svg width="62" height="62" viewBox="0 0 62 62" className="absolute bottom-2.5 left-2" fill="none" stroke="#c9cbce" aria-hidden="true">
        <path d="M5.500 57V15M5.500 57.500H47M1.500 53.500h8v8h-8zM51 48l10 10M61 48L51 58M6 2l5.500 5L17 2M11.500 7v5" />
      </svg>

      {/* view cube */}
      <div className="absolute top-1.5 right-2.5 flex flex-col items-center">
        <svg width="104" height="112" viewBox="1198 150 104 112" role="img" aria-label="ViewCube" fontSize="14" textAnchor="middle" fill="#a9adb2">
          <circle cx="1250" cy="206" r="41" fill="none" stroke="#42464f" strokeWidth="9" />
          <path d="M1230 186h40v40h-40z" fill="#a9acae" />
          <path d="M1238 194h25v25h-25z" fill="#99a2aa" />
          <text x="1250" y="215" fontSize="24" fill="#5f666e">上</text>
          <text x="1250" y="169">北</text>
          <text x="1250" y="255">南</text>
          <text x="1207" y="212">西</text>
          <text x="1293" y="212">东</text>
        </svg>
        <button className="mt-3 flex h-[13px] w-[39px] items-center justify-between rounded border border-[#9a9ca6] bg-[#85878f] px-0.5 text-[9px] text-[#50535b]">WCS<Caret /></button>
      </div>

      {/* command line */}
      <div className="absolute inset-x-0 bottom-px flex justify-center">
        <div className="flex h-[22px] w-[415px] bg-[#2a303c]">
          <span className="flex w-[9px] items-center justify-center"><svg width="4" height="15" viewBox="0 0 4 15" stroke="#8b919b" aria-hidden="true"><path d="M.5 0v15M3 0v15" strokeDasharray="1 1" /></svg></span>
          <button aria-label="关闭" className="flex w-[18px] items-center justify-center"><Ico s={9} vb="0 0 9 9"><path d="M1 1l7 7m0-7L1 8" strokeWidth="1.500" /></Ico></button>
          <button aria-label="自定义" className="flex w-[22px] items-center justify-center"><Ico s={13}><path d="M2 14l7-7" strokeWidth="2.500" /><path d="M13 1l-3 3 2 2 3-3a4 4 0 0 1-6 5 4 4 0 0 1 4-7z" fill={G} stroke="none" /></Ico></button>
          <div className="flex flex-1 items-center bg-[#bcbdbf] px-1 text-[#4a4d52]">
            <Ico s={12} w={15} vb="0 0 15 12"><path d="M.5 1.500h14v9H.5zM.5 3h14M3 5l2 1.500L3 8M6 8.500h3" stroke="#55585d" /></Ico>
            <span className="mx-0.5"><Caret /></span>
            <input aria-label="命令行" placeholder="键入命令" className="min-w-0 flex-1 bg-transparent px-1 text-[11px] italic outline-none placeholder:text-[#66696e]" />
            <Caret up />
          </div>
        </div>
      </div>
    </main>
  );
}

/* ---------- status bar ---------- */

type Tool = { n: string; d?: ReactNode; on?: boolean };
const caretTool: Tool = { n: '' };
const compass = 'M8 0l2 7 5 6-5-1v4H6v-4l-5 1 5-6z';

const drafting: Tool[] = [
  { n: '栅格', d: <path d="M4.500 1v14M8.500 1v14M12.500 1v14M1 4.500h14M1 8.500h14M1 12.500h14" /> },
  { n: '捕捉', on: true, d: <path d="M3 2v12M8 2v12M13 2v12" stroke="#fff" strokeWidth="2" strokeDasharray="2 2" /> },
  caretTool,
  { n: '推断约束', d: <g fill={G} stroke="none"><path d="M7 1h8v6H7zM1 9h7v5H1z" /><path d="M8 7v4" stroke={G} /></g> },
  { n: '动态输入', d: <><path d="M4.500 1v8M1 5.500h8" /><path d="M7 9h9v4H7z" fill={G} stroke="none" /></> },
  { n: '正交', on: true, d: <path d="M2.500 1v13H15M2.500 9.500H7V14" stroke="#fff" /> },
  { n: '极轴', d: <><circle cx="7" cy="9" r="5.500" /><path d="M7 9l6-7M7 9h8" /><path d="M12 7l3 2-3 2z" fill={G} /></> },
  caretTool,
  { n: '等轴测', d: <><path d="M2 3l12 10" stroke="#b8555c" /><path d="M8 1v14M8 8l5 5" stroke="#8f98a4" /></> },
  caretTool,
  { n: '对象捕捉追踪', on: true, d: <path d="M14 2L2 13.500h13" stroke="#fff" strokeWidth="1.300" /> },
  { n: '对象捕捉', on: true, d: <path d="M3.500 3.500h10v10h-10zM1.500 1.500h4v4h-4z" stroke="#fff" /> },
  caretTool,
  { n: '线宽', d: <><path d="M1 2.500h14" /><path d="M1 6.500h14" strokeWidth="2" /><path d="M1 12h8m1 0h5" strokeWidth="3" /></> },
  { n: '透明度', on: true, d: <><path d="M1 1h14v14H1z" fill="#3d5a80" stroke="none" /><path d="M1 2.500h14M1 8.500h14M1 14h14" stroke="#fff" strokeWidth="3" strokeDasharray="3 3" /><path d="M4 5.500h12M4 11.500h12" stroke="#fff" strokeWidth="3" strokeDasharray="3 3" /></> },
  { n: '选择循环', d: <><path d="M5 6h11v9H5z" fill="#7fd8a4" stroke="none" /><path d="M4 1v6M1 4h6" /></> },
  { n: '三维对象捕捉', d: <><path d="M5 4h8v8H5zM5 4l2-2h8v8l-2 2M13 4l2-2" /><path d="M1 11h4v4H1z" stroke="#d98a50" /></> },
  caretTool,
  { n: '动态 UCS', d: <path d="M3.500 2v10.500H14M1 4l2.500-3L6 4M12 10l3 2.500-3 2.500M9 3v5M7 5h5" /> },
  { n: '选择过滤', d: <><path d="M4 3h9l-1 10H3z" /><path d="M1 12h4v3H1zM11 12h4v3h-4zM2 2h3v3H2zM12 2h3v3h-3z" fill={B} stroke="none" /></> },
  caretTool,
  { n: '小控件', on: true, d: <><circle cx="8" cy="8" r="6.500" stroke="#fff" /><path d="M8 1v6l-5 5h10L8 7" stroke="#fff" /></> },
  caretTool,
  { n: '注释可见性', on: true, d: <><path d={compass} fill="#fff" stroke="none" /><circle cx="13" cy="3.500" r="2.500" stroke="#fff" /></> },
  { n: '自动缩放', d: <><path d={compass} fill={G} stroke="none" /><path d="M12 1l-1 4h3l-2 4" /></> },
  { n: '注释比例', d: <path d={compass} fill={G} stroke="none" /> },
];

function ToolCell({ tool, w = 'w-[21px]' }: { tool: Tool; w?: string }) {
  if (!tool.d) return <button aria-label="选项" className="flex w-[13px] items-center justify-center"><Caret /></button>;
  return (
    <button aria-label={tool.n} className={`${w} flex items-center justify-center border-r border-[#2d3441] ${tool.on ? 'bg-[#5f8fc6]' : ''}`}>
      <Ico s={14}>{tool.d}</Ico>
    </button>
  );
}

function StatusBar() {
  return (
    <footer className="flex h-[22px] shrink-0 items-start bg-[#222831] text-[10px] text-[#e6e8eb]">
      <nav className="flex h-4 pl-[9px]">
        <button className="w-10 rounded-b-lg bg-[#3b4453] font-bold">模型</button>
        <button className="ml-0.5 w-[42px] rounded-b-lg bg-[#2b323e] text-[#b4bac5]">布局1</button>
        <button className="ml-1.5 w-[42px] rounded-b-lg bg-[#2b323e] text-[#b4bac5]">布局2</button>
        <button aria-label="新建布局" className="ml-1.5 flex w-5 items-center justify-center rounded-b-lg bg-[#2b323e]"><Ico s={9} vb="0 0 9 9"><path d="M4.500 1v7M1 4.500h7" strokeWidth="1.500" /></Ico></button>
      </nav>
      <div className="mt-0.5 ml-auto flex h-5 bg-[#3b4453]">
        <button className="w-[152px] pr-[3px] text-right">160856.256, 549298.127, 0.000</button>
        <button className="ml-1 w-[25px] border-x border-[#2d3441] font-bold">模型</button>
        {drafting.map((t, i) => <ToolCell key={i} tool={t} />)}
        <button className="flex w-[63px] items-center justify-center gap-1.5 whitespace-nowrap">1:1 / 100%<Caret /></button>
        <ToolCell w="w-[22px]" tool={{ n: '切换工作空间', d: <><circle cx="8" cy="8" r="4" strokeWidth="3" /><path d="M8 0v4M8 12v4M0 8h4M12 8h4M2.500 2.500l3 3m5 5l3 3m0-11l-3 3m-5 5l-3 3" strokeWidth="2.500" /></> }} />
        <ToolCell tool={caretTool} />
        <ToolCell w="w-[22px]" tool={{ n: '注释监视器', d: <path d="M8 1v14M1 8h14" strokeWidth="2" /> }} />
        <button className="flex w-[81px] items-center gap-1.5 border-r border-[#2d3441] px-1 font-bold">
          <Ico s={14}><path d="M5 1h7v14H5z" fill={G} stroke="none" /><path d="M8 3.500h4M10 6.500h2M8 9.500h4M10 12.500h2" stroke="#3b4453" /></Ico>
          小数
          <span className="ml-auto"><Caret /></span>
        </button>
        <ToolCell w="w-[22px]" tool={{ n: '快捷特性', d: <><path d="M2.500 1.500h11v13h-11zM2.500 3h11" /><path d="M5 6h1m2 0h4M5 9h1m2 0h4M5 12h1m2 0h4" /></> }} />
        <ToolCell w="w-[22px]" tool={{ n: '锁定用户界面', d: <><path d="M8 12H1.500V2.500h12V7M1 4h13" /><path d="M8 9h6v5H8z" fill={G} stroke="none" /><path d="M11 9V6.500h4V9" /></> }} />
        <ToolCell tool={caretTool} />
        <ToolCell w="w-[22px]" tool={{ n: '隔离对象', d: <><path d="M1.500 1.500h5v5h-5zM8 9l3 5.500H5z" /><circle cx="12.500" cy="7" r="2.500" /></> }} />
        <ToolCell w="w-[22px]" tool={{ n: '硬件加速', d: <><circle cx="8" cy="8" r="6.500" fill="#7d838c" /><path d="M4 4l8 8" strokeWidth="1.500" /></> }} />
        <ToolCell w="w-[26px]" tool={{ n: '图形性能', d: <><path d="M2 2h7l5 5-3 6H4z" fill="#2f7cc4" stroke="none" /><path d="M3 0v5M0 2.500h9" stroke="#9fd0f4" /><path d="M0 9h6v5H0z" fill="#f2b53c" stroke="none" /><path d="M7 11l3 4 6-8" stroke="#4cc25a" strokeWidth="2.500" /></> }} />
        <ToolCell w="w-[22px]" tool={{ n: '全屏显示', d: <path d="M1 2.500h14v11H1zM10 5h3v3M3 8.500v3h3" /> }} />
        <ToolCell w="w-[22px]" tool={{ n: '自定义', d: <path d="M1 3h14M1 8h14M1 13h14" strokeWidth="2" /> }} />
      </div>
    </footer>
  );
}

export default function App() {
  return (
    <div className="h-screen bg-white pr-px pb-0.5 font-['Liberation_Sans','Noto_Sans_CJK_SC',sans-serif] leading-normal">
      <div className="flex h-full flex-col overflow-hidden border-[3px] border-b-4 border-black bg-[#3b4453]">
        <Header />
        <nav className="flex h-4 shrink-0 items-center gap-px bg-[#222831] pl-px text-[10px] text-[#c3c8d0]">
          {ribbonTabs.map((t, i) => (
            <button key={t} className={i === 0 ? 'h-full rounded-t bg-[#3b4453] px-2 font-bold text-white' : 'h-full px-2'}>{t}</button>
          ))}
          <button aria-label="最小化功能区" className="ml-5 flex items-center gap-1.5"><Ico s={7} w={11} vb="0 0 11 7"><rect width="11" height="7" rx="1" fill="#e6e8eb" stroke="none" /><path d="M3.500 4.500h4l-2-2z" fill="#222831" stroke="none" /></Ico><Caret /></button>
        </nav>
        <Ribbon />
        <div className="flex min-h-0 flex-1 pt-0.5">
          <Palette />
          <div className="w-[3px] shrink-0" />
          <Canvas />
        </div>
        <StatusBar />
      </div>
    </div>
  );
}
